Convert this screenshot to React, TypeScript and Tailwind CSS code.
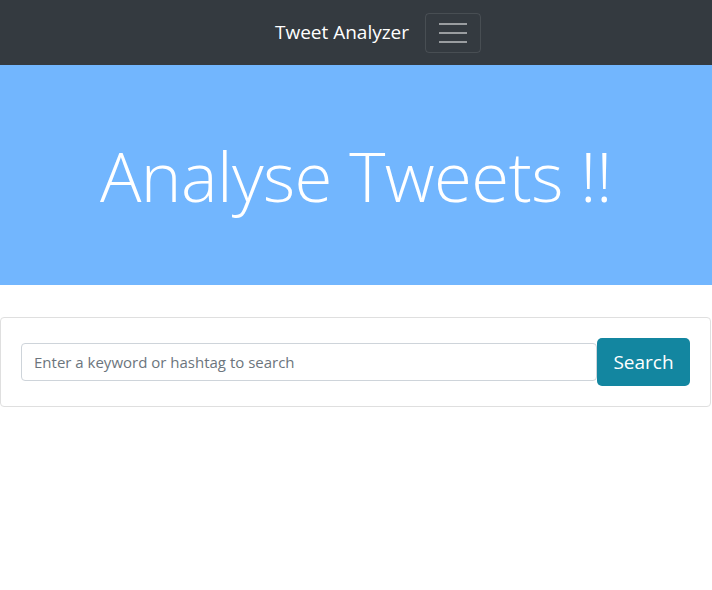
import { useState } from 'react'

const font = { fontFamily: '"Open Sans", "Noto Sans", "Liberation Sans", sans-serif' }

function NavBar() {
    return (
        <nav className="h-[65px] bg-[#343a40] flex items-center justify-center pl-[44px]">
            <a href="#" className="text-white text-[19px] leading-none mr-4">Tweet Analyzer</a>
            <button className="w-[56px] h-[40px] rounded border border-white/10 flex flex-col items-center justify-center gap-[7px]">
                <span className="block w-[28px] h-[2px] bg-white/50" />
                <span className="block w-[28px] h-[2px] bg-white/50" />
                <span className="block w-[28px] h-[2px] bg-white/50" />
            </button>
        </nav>
    )
}

export default function App() {
    const [query, setQuery] = useState('')
    return (
        <div className="min-h-screen bg-white" style={font}>
            <NavBar />
            <header className="h-[220px] bg-[#72b6fe] flex items-center justify-center mb-8">
                <h1 className="text-white text-[69px] font-light tracking-[-0.6px] leading-none pt-[1px]">Analyse Tweets !!</h1>
            </header>
            <div className="mr-px border border-[#dfdfdf] rounded p-5 flex items-center">
                <input
                    value={query}
                    onChange={e => setQuery(e.target.value)}
                    placeholder="Enter a keyword or hashtag to search"
                    className="flex-1 h-[38px] px-3 text-[15px] text-[#495057] border border-[#ced4da] rounded placeholder:text-[#6c757d] outline-none"
                />
                <button className="h-[48px] w-[93px] rounded-[5px] bg-[#1386a0] text-white text-[19px]">Search</button>
            </div>
        </div>
    )
}
